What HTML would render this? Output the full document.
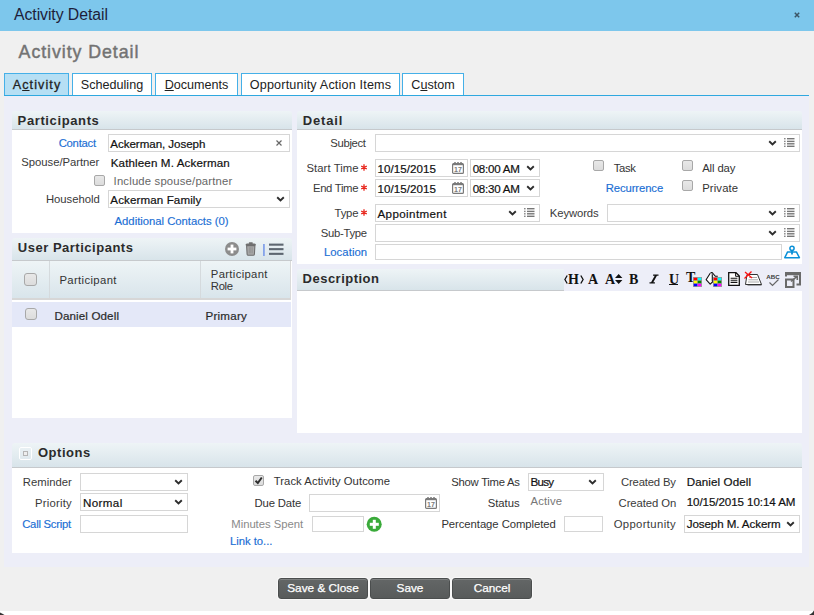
<!DOCTYPE html>
<html><head><meta charset="utf-8"><style>
*{margin:0;padding:0;box-sizing:border-box}
html,body{width:814px;height:615px;overflow:hidden}
body{background:#f0f0f0;font-family:"Liberation Sans",sans-serif;font-size:11.3px;color:#3a3a3a;position:relative}
body>div{position:absolute}
.t{white-space:nowrap;line-height:0;height:0}
.v{color:#111;font-size:11.6px;-webkit-text-stroke:.2px #111}
.lnk{color:#1a6ed4;-webkit-text-stroke:.15px #1a6ed4}
.g{color:#8a8a8a}
.tab{top:73px;height:23px;border:1px solid #45b0e8;border-bottom:none;background:#fff;font-size:12.6px;color:#222;text-align:center;line-height:23px;white-space:nowrap}
.tab.on{background:#b6dff4}
.ph{background:linear-gradient(#eef4f6,#d8e4ea);border-bottom:1px solid #c6c9cc;border-radius:3px 3px 0 0}
.hd{font-weight:bold;font-size:13px;letter-spacing:.55px;color:#2b2b2b}
.pb{background:#fff}
.inp{border:1px solid #d6d6d6;background:#fff}
.req{color:#e8261d}
.cb{border:1px solid #a8a8a8;border-radius:2px;background:linear-gradient(#e8e8e8,#dcdcdc)}
.tb{font-family:'Liberation Serif',serif;font-weight:bold;font-size:14px;line-height:0;height:0;color:#111;white-space:nowrap}
.btn{top:578px;height:21px;border:1px solid #4b4e4e;border-radius:3px;background:linear-gradient(#636666,#585b5b);box-shadow:inset 0 1px 0 #7d8080,0 0 0 1px rgba(255,255,255,.5);color:#fff;font-size:11.8px;text-align:center;line-height:19px;-webkit-text-stroke:.25px #fff}
</style></head><body>
<div style="left:0;top:0;width:814px;height:31px;background:#7dc7ec"></div>
<div class="t " style="font-size:15.8px;color:#1d1d3a;letter-spacing:-0.064px;left:14.00px;top:16px;top:15px">Activity Detail</div>
<svg style="position:absolute;left:794px;top:12px" width="6" height="6" viewBox="0 0 6 6"><path d="M.8 .8L5.2 5.2M5.2 .8L.8 5.2" stroke="#3b5566" stroke-width="1.5"/></svg>
<div class="t " style="font-size:17.8px;font-weight:400;color:#737373;letter-spacing:0.931px;left:18.60px;top:54px;top:52px;-webkit-text-stroke:.45px #737373">Activity Detail</div>
<div class="" style="left:4px;top:96px;width:805px;height:471px;background:#edeef8"></div>
<div class="tab on" style="left:4px;width:65px;letter-spacing:1.1px;text-indent:1px;-webkit-text-stroke:.3px #222">A<u>c</u>tivity</div>
<div class="tab" style="left:72px;width:80px">Scheduling</div>
<div class="tab" style="left:155px;width:83px"><u>D</u>ocuments</div>
<div class="tab" style="left:241px;width:159px;letter-spacing:.18px">Opportunity Action Items</div>
<div class="tab" style="left:402px;width:62px">C<u>u</u>stom</div>
<div class="" style="left:4px;top:95px;width:805px;height:1px;background:#2fa8df"></div>
<div class="ph" style="left:12px;top:111px;width:280px;height:19px;"></div>
<div class="t hd" style="letter-spacing:0.620px;left:17.60px;top:121px">Participants</div>
<div class="pb" style="left:12px;top:130px;width:280px;height:103px;"></div>
<div class="t lnk" style="letter-spacing:-0.266px;right:718.23px;top:143px">Contact</div>
<div class="inp" style="left:108px;top:134px;width:182px;height:18px;"></div>
<div class="t v" style="letter-spacing:-0.058px;left:110.30px;top:144px">Ackerman, Joseph</div>
<svg style="position:absolute;left:276px;top:140px" width="6" height="6" viewBox="0 0 6 6"><path d="M.5 .5L5.5 5.5M5.5 .5L.5 5.5" stroke="#666" stroke-width="1.2"/></svg>
<div class="t " style="letter-spacing:-0.034px;right:714.67px;top:162px">Spouse/Partner</div>
<div class="t v" style="letter-spacing:0.130px;left:110.70px;top:163px">Kathleen M. Ackerman</div>
<div class="cb" style="left:94px;top:175px;width:11px;height:11px;"></div>
<div class="t " style="color:#666;letter-spacing:0.178px;left:113.60px;top:181px">Include spouse/partner</div>
<div class="t " style="letter-spacing:-0.004px;right:714.12px;top:199px">Household</div>
<div class="inp" style="left:108px;top:190px;width:182px;height:18px;"></div>
<div class="t v" style="letter-spacing:0.104px;left:110.30px;top:200px">Ackerman Family</div>
<svg style="position:absolute;left:275.5px;top:196px" width="9" height="6" viewBox="0 0 9 6"><path d="M1.2 1.2L4.5 4.4L7.8 1.2" stroke="#2e2e2e" stroke-width="1.9" fill="none"/></svg>
<div class="t lnk" style="letter-spacing:-0.019px;left:114.60px;top:221px">Additional Contacts (0)</div>
<div class="ph" style="left:12px;top:238px;width:280px;height:23px;"></div>
<div class="t hd" style="letter-spacing:0.512px;left:17.80px;top:248px">User Participants</div>
<svg style="position:absolute;left:225px;top:242px" width="14" height="14" viewBox="0 0 14 14"><circle cx="7" cy="7" r="7" fill="#8c8c8c"/><rect x="2.6" y="5.6" width="8.8" height="2.8" fill="#fff"/><rect x="5.6" y="2.6" width="2.8" height="8.8" fill="#fff"/></svg>
<svg style="position:absolute;left:245px;top:242px" width="12" height="14" viewBox="0 0 12 14"><path d="M.5 3.2Q.5 1.6 2 1.6H9.5Q11 1.6 11 3.2z" fill="#707070"/><rect x="3.8" y=".3" width="4" height="1.6" rx=".6" fill="#707070"/><path d="M1.6 3.6h8.3l-.5 8.6q-.1 1.1-1.2 1.1H3.3q-1.1 0-1.2-1.1z" fill="#a9a9a9" stroke="#6e6e6e" stroke-width="1.1"/><path d="M4.3 5.2v6.2M5.75 5.2v6.2M7.2 5.2v6.2" stroke="#8a8a8a" stroke-width=".7"/></svg>
<div class="" style="left:263px;top:244px;width:2px;height:12px;background:linear-gradient(90deg,#7d9ee8,#9fb6ee)"></div>
<svg style="position:absolute;left:269px;top:243px" width="15" height="13" viewBox="0 0 15 13"><rect x="0" y="0.6" width="14.5" height="2.1" fill="#5d6670"/><rect x="0" y="5.1" width="14.5" height="2.1" fill="#5d6670"/><rect x="0" y="9.8" width="14.5" height="2.1" fill="#5d6670"/></svg>
<div class="pb" style="left:12px;top:261px;width:280px;height:157px;"></div>
<div class="" style="left:12px;top:261px;width:279px;height:39px;background:linear-gradient(#eef4f6,#d9e5eb);border-bottom:2px solid #d7d7d7;border-right:1px solid #d9d9d9"></div>
<div class="" style="left:49px;top:261px;width:1px;height:37px;background:#d5dadd"></div>
<div class="" style="left:200px;top:261px;width:1px;height:37px;background:#d5dadd"></div>
<div class="cb" style="left:24px;top:273px;width:13px;height:13px;border-radius:3px"></div>
<div class="t " style="color:#333;letter-spacing:0.367px;left:59.40px;top:280px">Participant</div>
<div class="t " style="color:#333;letter-spacing:0.327px;left:210.80px;top:274px">Participant</div>
<div class="t " style="color:#333;letter-spacing:-0.317px;left:210.80px;top:286px">Role</div>
<div class="" style="left:12px;top:302px;width:279px;height:25px;background:#e4e8f8"></div>
<div class="cb" style="left:25px;top:308px;width:12px;height:12px;border-radius:3px"></div>
<div class="t v" style="color:#333;letter-spacing:0.129px;left:54.40px;top:316px">Daniel Odell</div>
<div class="t v" style="color:#333;letter-spacing:0.227px;left:205.50px;top:316px">Primary</div>
<div class="ph" style="left:297px;top:111px;width:505px;height:19px;"></div>
<div class="t hd" style="letter-spacing:0.822px;left:302.80px;top:121px">Detail</div>
<div class="pb" style="left:297px;top:130px;width:505px;height:134px;"></div>
<div class="t " style="letter-spacing:-0.340px;right:448.40px;top:143px">Subject</div>
<div class="inp" style="left:375px;top:134px;width:425px;height:18px;"></div>
<svg style="position:absolute;left:768px;top:140px" width="9" height="6" viewBox="0 0 9 6"><path d="M1.2 1.2L4.5 4.4L7.8 1.2" stroke="#2e2e2e" stroke-width="1.9" fill="none"/></svg>
<svg style="position:absolute;left:784px;top:138px" width="11" height="9" viewBox="0 0 11 9"><rect x="0" y="0" width="1.6" height="1.4" fill="#8a8a8a"/><rect x="3" y="0" width="7.5" height="1.4" fill="#777"/><rect x="0" y="2.7" width="1.6" height="1.4" fill="#8a8a8a"/><rect x="3" y="2.7" width="7.5" height="1.4" fill="#777"/><rect x="0" y="5.1" width="1.6" height="1.4" fill="#8a8a8a"/><rect x="3" y="5.1" width="7.5" height="1.4" fill="#777"/><rect x="0" y="7.6" width="1.6" height="1.4" fill="#8a8a8a"/><rect x="3" y="7.6" width="7.5" height="1.4" fill="#777"/></svg>
<div class="t " style="letter-spacing:0.056px;right:455.46px;top:168px">Start Time</div>
<svg style="position:absolute;left:361px;top:164px" width="6" height="7" viewBox="0 0 6 7"><path d="M3 .3V6.7M.2 2.1L5.8 4.9M5.8 2.1L.2 4.9" stroke="#e8261d" stroke-width="1.3"/></svg>
<div class="inp" style="left:375px;top:159px;width:93px;height:18px;"></div>
<div class="t v" style="letter-spacing:0.047px;left:377.50px;top:169px">10/15/2015</div>
<svg style="position:absolute;left:452px;top:162px" width="12" height="12" viewBox="0 0 12 12"><rect x=".6" y="1.6" width="10.8" height="9.8" rx="1" fill="#fff" stroke="#7a7a7a" stroke-width="1.2"/><rect x="1" y="1" width="10" height="2.2" fill="#7a7a7a"/><circle cx="3" cy="1" r="1" fill="#7a7a7a"/><circle cx="6" cy="1" r="1" fill="#7a7a7a"/><circle cx="9" cy="1" r="1" fill="#7a7a7a"/><text x="6" y="10" font-family="Liberation Sans" font-size="7" font-weight="bold" fill="#7a7a7a" text-anchor="middle">17</text></svg>
<div class="inp" style="left:470px;top:159px;width:70px;height:18px;"></div>
<div class="t v" style="letter-spacing:-0.267px;left:472.70px;top:169px">08:00 AM</div>
<svg style="position:absolute;left:526px;top:165px" width="9" height="6" viewBox="0 0 9 6"><path d="M1.2 1.2L4.5 4.4L7.8 1.2" stroke="#2e2e2e" stroke-width="1.9" fill="none"/></svg>
<div class="t " style="letter-spacing:-0.306px;right:455.82px;top:188px">End Time</div>
<svg style="position:absolute;left:361px;top:184px" width="6" height="7" viewBox="0 0 6 7"><path d="M3 .3V6.7M.2 2.1L5.8 4.9M5.8 2.1L.2 4.9" stroke="#e8261d" stroke-width="1.3"/></svg>
<div class="inp" style="left:375px;top:179px;width:93px;height:18px;"></div>
<div class="t v" style="letter-spacing:0.047px;left:377.50px;top:189px">10/15/2015</div>
<svg style="position:absolute;left:452px;top:182px" width="12" height="12" viewBox="0 0 12 12"><rect x=".6" y="1.6" width="10.8" height="9.8" rx="1" fill="#fff" stroke="#7a7a7a" stroke-width="1.2"/><rect x="1" y="1" width="10" height="2.2" fill="#7a7a7a"/><circle cx="3" cy="1" r="1" fill="#7a7a7a"/><circle cx="6" cy="1" r="1" fill="#7a7a7a"/><circle cx="9" cy="1" r="1" fill="#7a7a7a"/><text x="6" y="10" font-family="Liberation Sans" font-size="7" font-weight="bold" fill="#7a7a7a" text-anchor="middle">17</text></svg>
<div class="inp" style="left:470px;top:179px;width:70px;height:18px;"></div>
<div class="t v" style="letter-spacing:-0.267px;left:472.70px;top:189px">08:30 AM</div>
<svg style="position:absolute;left:526px;top:185px" width="9" height="6" viewBox="0 0 9 6"><path d="M1.2 1.2L4.5 4.4L7.8 1.2" stroke="#2e2e2e" stroke-width="1.9" fill="none"/></svg>
<div class="cb" style="left:593px;top:160px;width:11px;height:11px;"></div>
<div class="t " style="color:#333;letter-spacing:-0.326px;left:613.70px;top:168px">Task</div>
<div class="cb" style="left:682px;top:160px;width:11px;height:11px;"></div>
<div class="t " style="color:#333;letter-spacing:-0.110px;left:702.20px;top:168px">All day</div>
<div class="t lnk" style="letter-spacing:-0.112px;left:605.80px;top:188px">Recurrence</div>
<div class="cb" style="left:682px;top:180px;width:11px;height:11px;"></div>
<div class="t " style="color:#333;letter-spacing:0.121px;left:702.20px;top:188px">Private</div>
<div class="t " style="letter-spacing:-0.203px;right:455.72px;top:213px">Type</div>
<svg style="position:absolute;left:361px;top:209px" width="6" height="7" viewBox="0 0 6 7"><path d="M3 .3V6.7M.2 2.1L5.8 4.9M5.8 2.1L.2 4.9" stroke="#e8261d" stroke-width="1.3"/></svg>
<div class="inp" style="left:375px;top:204px;width:165px;height:18px;"></div>
<div class="t v" style="letter-spacing:0.383px;left:377.50px;top:214px">Appointment</div>
<svg style="position:absolute;left:508px;top:210px" width="9" height="6" viewBox="0 0 9 6"><path d="M1.2 1.2L4.5 4.4L7.8 1.2" stroke="#2e2e2e" stroke-width="1.9" fill="none"/></svg>
<svg style="position:absolute;left:524px;top:208px" width="11" height="9" viewBox="0 0 11 9"><rect x="0" y="0" width="1.6" height="1.4" fill="#8a8a8a"/><rect x="3" y="0" width="7.5" height="1.4" fill="#777"/><rect x="0" y="2.7" width="1.6" height="1.4" fill="#8a8a8a"/><rect x="3" y="2.7" width="7.5" height="1.4" fill="#777"/><rect x="0" y="5.1" width="1.6" height="1.4" fill="#8a8a8a"/><rect x="3" y="5.1" width="7.5" height="1.4" fill="#777"/><rect x="0" y="7.6" width="1.6" height="1.4" fill="#8a8a8a"/><rect x="3" y="7.6" width="7.5" height="1.4" fill="#777"/></svg>
<div class="t " style="letter-spacing:-0.107px;right:215.46px;top:213px">Keywords</div>
<div class="inp" style="left:607px;top:204px;width:193px;height:18px;"></div>
<svg style="position:absolute;left:768px;top:210px" width="9" height="6" viewBox="0 0 9 6"><path d="M1.2 1.2L4.5 4.4L7.8 1.2" stroke="#2e2e2e" stroke-width="1.9" fill="none"/></svg>
<svg style="position:absolute;left:784px;top:208px" width="11" height="9" viewBox="0 0 11 9"><rect x="0" y="0" width="1.6" height="1.4" fill="#8a8a8a"/><rect x="3" y="0" width="7.5" height="1.4" fill="#777"/><rect x="0" y="2.7" width="1.6" height="1.4" fill="#8a8a8a"/><rect x="3" y="2.7" width="7.5" height="1.4" fill="#777"/><rect x="0" y="5.1" width="1.6" height="1.4" fill="#8a8a8a"/><rect x="3" y="5.1" width="7.5" height="1.4" fill="#777"/><rect x="0" y="7.6" width="1.6" height="1.4" fill="#8a8a8a"/><rect x="3" y="7.6" width="7.5" height="1.4" fill="#777"/></svg>
<div class="t " style="letter-spacing:-0.282px;right:447.20px;top:233px">Sub-Type</div>
<div class="inp" style="left:375px;top:224px;width:425px;height:18px;"></div>
<svg style="position:absolute;left:768px;top:230px" width="9" height="6" viewBox="0 0 9 6"><path d="M1.2 1.2L4.5 4.4L7.8 1.2" stroke="#2e2e2e" stroke-width="1.9" fill="none"/></svg>
<svg style="position:absolute;left:784px;top:228px" width="11" height="9" viewBox="0 0 11 9"><rect x="0" y="0" width="1.6" height="1.4" fill="#8a8a8a"/><rect x="3" y="0" width="7.5" height="1.4" fill="#777"/><rect x="0" y="2.7" width="1.6" height="1.4" fill="#8a8a8a"/><rect x="3" y="2.7" width="7.5" height="1.4" fill="#777"/><rect x="0" y="5.1" width="1.6" height="1.4" fill="#8a8a8a"/><rect x="3" y="5.1" width="7.5" height="1.4" fill="#777"/><rect x="0" y="7.6" width="1.6" height="1.4" fill="#8a8a8a"/><rect x="3" y="7.6" width="7.5" height="1.4" fill="#777"/></svg>
<div class="t lnk" style="letter-spacing:0.067px;right:446.85px;top:252px">Location</div>
<div class="inp" style="left:375px;top:244px;width:407px;height:16px;"></div>
<svg style="position:absolute;left:784px;top:245px" width="17" height="14" viewBox="0 0 17 14"><circle cx="8" cy="3.3" r="2.1" fill="none" stroke="#0a90d8" stroke-width="1.5"/><path d="M8 5.2v4.3" stroke="#0a90d8" stroke-width="1.8"/><path d="M3.6 6.9h8.8l3 5.8H.8z" fill="none" stroke="#0a90d8" stroke-width="1.5" stroke-linejoin="round"/></svg>
<div class="ph" style="left:297px;top:269px;width:505px;height:22px;"></div>
<div class="t hd" style="letter-spacing:0.483px;left:302.60px;top:279px">Description</div>
<div class="" style="left:564px;top:269px;width:238px;height:22px;background:#edeef8"></div>
<div class="pb" style="left:297px;top:291px;width:505px;height:142px;"></div>
<div class="tb" style="left:568px;top:280px">H</div>
<svg style="position:absolute;left:564px;top:274px" width="20" height="11" viewBox="0 0 20 11"><path d="M3.2 1.5L.9 5.5L3.2 9.5M16.8 1.5L19.1 5.5L16.8 9.5" stroke="#111" stroke-width="1.3" fill="none"/></svg>
<div class="tb" style="left:588px;top:280px">A</div>
<div class="tb" style="left:605px;top:280px">A</div>
<svg style="position:absolute;left:615px;top:274px" width="8" height="10" viewBox="0 0 8 10"><path d="M0 4L3.7 0L7.4 4z M0 6L3.7 10L7.4 6z" fill="#111"/></svg>
<div class="tb" style="left:629px;top:280px">B</div>
<svg style="position:absolute;left:649px;top:274px" width="10" height="10" viewBox="0 0 10 10"><path d="M4.2 .5h5.3v1.2h-1.6L4.3 8.3h1.6v1.2H.5V8.3h1.6L5.7 1.7H4z" fill="#111"/></svg>
<div class="tb" style="left:669px;top:280px">U</div>
<div class="" style="left:669px;top:284px;width:9px;height:1px;background:#111"></div>
<div class="tb" style="left:686px;top:278px">T</div>
<svg style="position:absolute;left:693px;top:277px" width="9" height="10" viewBox="0 0 9 10"><rect width="9" height="10" fill="#999"/><rect x=".8" y=".8" width="3.4" height="2.4" fill="#f00"/><rect x="4.8" y=".8" width="3.4" height="2.4" fill="#0ff"/><rect x=".8" y="3.8" width="3.4" height="2.4" fill="#ff0"/><rect x="4.8" y="3.8" width="3.4" height="2.4" fill="#080"/><rect x=".8" y="6.8" width="3.4" height="2.4" fill="#00f"/><rect x="4.8" y="6.8" width="3.4" height="2.4" fill="#f0f"/></svg>
<svg style="position:absolute;left:705px;top:272px" width="14" height="14" viewBox="0 0 14 14"><path d="M5.2 1.3L1.1 7.7L5.2 12.2L8.5 9" fill="#fff" stroke="#111" stroke-width="1.1" stroke-linejoin="round"/><path d="M7.3 2.2V9.3" stroke="#111" stroke-width="1.1"/><path d="M5.5 1.1Q6.8 0 8 1.5L10.3 4.3H12.8" fill="none" stroke="#111" stroke-width="1.1"/></svg>
<svg style="position:absolute;left:713px;top:277px" width="9" height="10" viewBox="0 0 9 10"><rect width="9" height="10" fill="#999"/><rect x=".8" y=".8" width="3.4" height="2.4" fill="#f00"/><rect x="4.8" y=".8" width="3.4" height="2.4" fill="#0ff"/><rect x=".8" y="3.8" width="3.4" height="2.4" fill="#ff0"/><rect x="4.8" y="3.8" width="3.4" height="2.4" fill="#080"/><rect x=".8" y="6.8" width="3.4" height="2.4" fill="#00f"/><rect x="4.8" y="6.8" width="3.4" height="2.4" fill="#f0f"/></svg>
<svg style="position:absolute;left:728px;top:272px" width="12" height="14" viewBox="0 0 12 14"><path d="M.7 .7h7.3l3.3 3.3v9.3H.7z" fill="#fff" stroke="#111" stroke-width="1.3"/><path d="M7.6 .7v3.6h3.6" fill="none" stroke="#111" stroke-width="1"/><path d="M2.6 6.2h6.8M2.6 8.3h6.8M2.6 10.4h6.8" stroke="#111" stroke-width="1.1"/></svg>
<svg style="position:absolute;left:744px;top:271px" width="19" height="15" viewBox="0 0 19 15"><path d="M3 3.5h10.5l4 10H1.5z" fill="#fff" stroke="#333" stroke-width="1"/><path d="M3.5 13.8h14" stroke="#333" stroke-width="1.2"/><path d="M5 6.5h8M4.5 8.8h9.5M4 11h11" stroke="#aaa" stroke-width="1"/><path d="M1 1L8 7M7.5 .5L.5 7.5" stroke="#f11" stroke-width="1.3"/></svg>
<svg style="position:absolute;left:766px;top:273px" width="14" height="14" viewBox="0 0 14 14"><text x="7" y="5.8" font-family="Liberation Sans" font-size="6.2" font-weight="bold" fill="#3a3a3a" text-anchor="middle">ABC</text><path d="M3.5 9.5L6.5 12.5L12.5 6.5" stroke="#666" stroke-width="1.2" fill="none"/></svg>
<svg style="position:absolute;left:785px;top:272px" width="16" height="16" viewBox="0 0 16 16"><path d="M1 4.5V1h14v11.5h-3.5" stroke="#6a6a6a" stroke-width="2" fill="none"/><rect x="0" y="0" width="16" height="3.2" fill="#6a6a6a"/><rect x="1" y="7.5" width="7.5" height="7.5" fill="none" stroke="#6a6a6a" stroke-width="2"/><path d="M6 9.5L12.3 4.2M8.5 4.2h3.8V8" stroke="#6a6a6a" stroke-width="1.6" fill="none"/></svg>
<div class="ph" style="left:12px;top:443px;width:790px;height:25px;"></div>
<div class="t hd" style="letter-spacing:0.537px;left:37.90px;top:453px">Options</div>
<div class="" style="left:19px;top:447px;width:13px;height:13px;border:1px solid #fff;border-radius:2px"></div>
<div class="" style="left:23px;top:451px;width:5px;height:5px;border:1px solid #b5b5b5;background:#eee"></div>
<div class="pb" style="left:12px;top:468px;width:790px;height:85px;"></div>
<div class="t " style="letter-spacing:-0.001px;right:742.24px;top:482px">Reminder</div>
<div class="inp" style="left:80px;top:473px;width:108px;height:18px;"></div>
<svg style="position:absolute;left:174px;top:479px" width="9" height="6" viewBox="0 0 9 6"><path d="M1.2 1.2L4.5 4.4L7.8 1.2" stroke="#2e2e2e" stroke-width="1.9" fill="none"/></svg>
<div class="t " style="letter-spacing:0.214px;right:742.14px;top:503px">Priority</div>
<div class="inp" style="left:80px;top:493px;width:108px;height:18px;"></div>
<div class="t v" style="letter-spacing:0.383px;left:83.00px;top:503px">Normal</div>
<svg style="position:absolute;left:174px;top:499px" width="9" height="6" viewBox="0 0 9 6"><path d="M1.2 1.2L4.5 4.4L7.8 1.2" stroke="#2e2e2e" stroke-width="1.9" fill="none"/></svg>
<div class="t lnk" style="letter-spacing:-0.254px;right:743.12px;top:524px">Call Script</div>
<div class="inp" style="left:80px;top:515px;width:108px;height:18px;"></div>
<div class="cb" style="left:253px;top:475px;width:11px;height:11px;"></div>
<svg style="position:absolute;left:254px;top:476px" width="9" height="9" viewBox="0 0 9 9"><path d="M1.5 4.8L3.8 7L7.8 1.5" stroke="#2e2e2e" stroke-width="2" fill="none"/></svg>
<div class="t " style="color:#333;letter-spacing:0.056px;left:273.70px;top:481px">Track Activity Outcome</div>
<div class="t " style="color:#333;letter-spacing:-0.135px;right:512.85px;top:503px">Due Date</div>
<div class="inp" style="left:309px;top:494px;width:131px;height:18px;"></div>
<svg style="position:absolute;left:425px;top:497px" width="12" height="12" viewBox="0 0 12 12"><rect x=".6" y="1.6" width="10.8" height="9.8" rx="1" fill="#fff" stroke="#7a7a7a" stroke-width="1.2"/><rect x="1" y="1" width="10" height="2.2" fill="#7a7a7a"/><circle cx="3" cy="1" r="1" fill="#7a7a7a"/><circle cx="6" cy="1" r="1" fill="#7a7a7a"/><circle cx="9" cy="1" r="1" fill="#7a7a7a"/><text x="6" y="10" font-family="Liberation Sans" font-size="7" font-weight="bold" fill="#7a7a7a" text-anchor="middle">17</text></svg>
<div class="t g" style="letter-spacing:-0.040px;right:511.00px;top:524px">Minutes Spent</div>
<div class="inp" style="left:312px;top:516px;width:52px;height:16px;"></div>
<svg style="position:absolute;left:366px;top:516px" width="16" height="16" viewBox="0 0 16 16"><circle cx="8.2" cy="8.3" r="7.5" fill="#3aaa3a"/><rect x="3.8" y="6.8" width="9" height="3" fill="#fff"/><rect x="6.8" y="3.8" width="3" height="9" fill="#fff"/></svg>
<div class="t lnk" style="letter-spacing:-0.018px;left:229.90px;top:541px">Link to...</div>
<div class="t " style="color:#333;letter-spacing:-0.278px;right:294.43px;top:482px">Show Time As</div>
<div class="inp" style="left:528px;top:473px;width:76px;height:18px;"></div>
<div class="t v" style="letter-spacing:-0.726px;left:530.50px;top:482px">Busy</div>
<svg style="position:absolute;left:588px;top:479px" width="9" height="6" viewBox="0 0 9 6"><path d="M1.2 1.2L4.5 4.4L7.8 1.2" stroke="#2e2e2e" stroke-width="1.9" fill="none"/></svg>
<div class="t " style="color:#333;right:294.35px;top:503px">Status</div>
<div class="t " style="color:#777;letter-spacing:0.164px;left:530.50px;top:501px">Active</div>
<div class="t " style="color:#333;letter-spacing:-0.061px;right:258.28px;top:524px">Percentage Completed</div>
<div class="inp" style="left:564px;top:516px;width:39px;height:16px;"></div>
<div class="t " style="letter-spacing:-0.174px;right:138.23px;top:482px">Created By</div>
<div class="t v" style="letter-spacing:0.111px;left:686.70px;top:482px">Daniel Odell</div>
<div class="t " style="letter-spacing:-0.080px;right:137.80px;top:503px">Created On</div>
<div class="t v" style="letter-spacing:-0.079px;left:686.70px;top:502px">10/15/2015 10:14 AM</div>
<div class="t " style="letter-spacing:0.355px;right:138.00px;top:524px">Opportunity</div>
<div class="inp" style="left:684px;top:515px;width:116px;height:18px;"></div>
<div class="t v" style="letter-spacing:-0.089px;left:686.70px;top:524px">Joseph M. Ackerm</div>
<svg style="position:absolute;left:786px;top:521px" width="9" height="6" viewBox="0 0 9 6"><path d="M1.2 1.2L4.5 4.4L7.8 1.2" stroke="#2e2e2e" stroke-width="1.9" fill="none"/></svg>
<div class="" style="left:0px;top:611px;width:814px;height:4px;background:#fff"></div>
<svg style="position:absolute;left:0px;top:611px" width="6" height="4" viewBox="0 0 6 4"><path d="M0 1.5Q2.5 2.5 4.5 4H0z" fill="#333"/></svg>
<svg style="position:absolute;left:808px;top:610px" width="6" height="5" viewBox="0 0 6 5"><path d="M6 .5Q4.5 3.5 1 5H6z" fill="#333"/></svg>
<div class="btn" style="left:278px;width:90px">Save &amp; Close</div>
<div class="btn" style="left:370px;width:80px">Save</div>
<div class="btn" style="left:452px;width:80px">Cancel</div>
</body></html>
